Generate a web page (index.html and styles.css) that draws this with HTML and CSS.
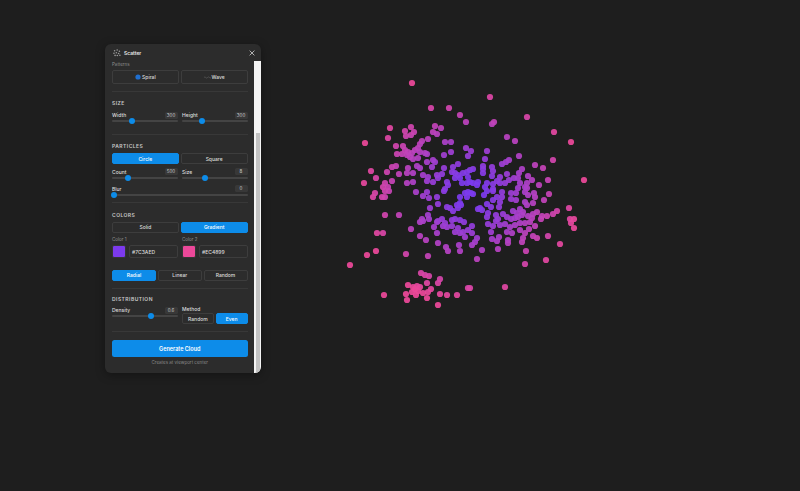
FILE: index.html
```html
<!DOCTYPE html>
<html lang="en">
<head>
<meta charset="utf-8">
<title>Scatter</title>
<link rel="stylesheet" href="styles.css">
</head>
<body>
<svg class="cloud" width="800" height="491" viewBox="0 0 800 491">
<defs><radialGradient id="cloudGrad" gradientUnits="userSpaceOnUse" cx="470" cy="192" r="112"><stop offset=".12" stop-color="#7C3AED"/><stop offset="1" stop-color="#EC4899"/></radialGradient></defs>
<g class="dots" fill="url(#cloudGrad)">
<circle cx="412" cy="83"/><circle cx="431" cy="108"/><circle cx="449" cy="108"/><circle cx="460" cy="115"/><circle cx="466" cy="122"/><circle cx="390" cy="128"/><circle cx="411" cy="127"/><circle cx="405" cy="131"/><circle cx="414" cy="132"/><circle cx="406" cy="136"/><circle cx="411" cy="135"/><circle cx="435" cy="126"/><circle cx="441" cy="128"/><circle cx="433" cy="132"/><circle cx="437" cy="134"/><circle cx="388" cy="138"/><circle cx="428" cy="139"/><circle cx="445" cy="142"/><circle cx="451" cy="142"/><circle cx="365" cy="143"/><circle cx="396" cy="146"/><circle cx="403" cy="146"/><circle cx="422" cy="141"/><circle cx="420" cy="144"/><circle cx="418" cy="148"/><circle cx="466" cy="148"/><circle cx="451" cy="152"/><circle cx="444" cy="155"/><circle cx="468" cy="156"/>
<circle cx="405" cy="150"/><circle cx="408" cy="152"/><circle cx="412" cy="153"/><circle cx="407" cy="155"/><circle cx="402" cy="154"/><circle cx="397" cy="154"/><circle cx="410" cy="157"/><circle cx="413" cy="159"/><circle cx="418" cy="158"/><circle cx="415" cy="150"/><circle cx="420" cy="152"/><circle cx="425" cy="153"/><circle cx="427" cy="154"/><circle cx="427" cy="162"/><circle cx="433" cy="160"/><circle cx="435" cy="162"/><circle cx="432" cy="167"/><circle cx="371" cy="171"/><circle cx="376" cy="178"/><circle cx="364" cy="183"/><circle cx="387" cy="172"/><circle cx="392" cy="167"/><circle cx="396" cy="166"/><circle cx="399" cy="174"/><circle cx="408" cy="168"/><circle cx="417" cy="166"/><circle cx="420" cy="168"/><circle cx="407" cy="173"/><circle cx="413" cy="173"/><circle cx="392" cy="181"/><circle cx="385" cy="183"/><circle cx="383" cy="187"/><circle cx="388" cy="187"/><circle cx="407" cy="183"/><circle cx="413" cy="182"/><circle cx="427" cy="181"/><circle cx="433" cy="182"/>
<circle cx="423" cy="175"/><circle cx="428" cy="177"/><circle cx="437" cy="175"/><circle cx="442" cy="174"/><circle cx="444" cy="168"/><circle cx="453" cy="167"/><circle cx="458" cy="164"/><circle cx="455" cy="173"/><circle cx="452" cy="172"/><circle cx="447" cy="182"/><circle cx="448" cy="185"/><circle cx="438" cy="178"/><circle cx="458" cy="175"/><circle cx="463" cy="173"/><circle cx="467" cy="172"/><circle cx="460" cy="178"/><circle cx="455" cy="178"/><circle cx="468" cy="177"/><circle cx="445" cy="189"/><circle cx="462" cy="183"/><circle cx="467" cy="183"/>
<circle cx="490" cy="97"/><circle cx="527" cy="117"/><circle cx="494" cy="122"/><circle cx="492" cy="124"/><circle cx="554" cy="132"/><circle cx="571" cy="142"/><circle cx="507" cy="137"/><circle cx="515" cy="141"/><circle cx="487" cy="151"/><circle cx="471" cy="151"/><circle cx="485" cy="159"/><circle cx="519" cy="156"/><circle cx="509" cy="160"/><circle cx="506" cy="162"/><circle cx="502" cy="164"/><circle cx="553" cy="160"/><circle cx="535" cy="165"/><circle cx="543" cy="168"/><circle cx="522" cy="169"/><circle cx="519" cy="173"/><circle cx="507" cy="174"/><circle cx="528" cy="176"/><circle cx="532" cy="180"/><circle cx="548" cy="180"/><circle cx="584" cy="180"/><circle cx="539" cy="185"/><circle cx="483" cy="166"/><circle cx="483" cy="169"/><circle cx="483" cy="173"/><circle cx="492" cy="167"/><circle cx="493" cy="171"/><circle cx="492" cy="176"/><circle cx="473" cy="169"/><circle cx="470" cy="170"/><circle cx="500" cy="177"/><circle cx="497" cy="181"/><circle cx="493" cy="184"/><circle cx="500" cy="183"/><circle cx="478" cy="182"/><circle cx="473" cy="183"/><circle cx="477" cy="185"/><circle cx="470" cy="182"/><circle cx="485" cy="187"/><circle cx="493" cy="189"/><circle cx="487" cy="183"/><circle cx="505" cy="183"/><circle cx="509" cy="180"/><circle cx="514" cy="178"/><circle cx="518" cy="178"/><circle cx="520" cy="183"/><circle cx="527" cy="183"/><circle cx="525" cy="187"/><circle cx="518" cy="188"/><circle cx="527" cy="188"/>
<circle cx="473" cy="194"/><circle cx="471" cy="193"/><circle cx="484" cy="195"/><circle cx="493" cy="191"/><circle cx="487" cy="191"/><circle cx="502" cy="192"/><circle cx="511" cy="193"/><circle cx="516" cy="193"/><circle cx="525" cy="192"/><circle cx="528" cy="195"/><circle cx="534" cy="193"/><circle cx="535" cy="197"/><circle cx="549" cy="194"/><circle cx="502" cy="197"/><circle cx="497" cy="197"/><circle cx="493" cy="200"/><circle cx="500" cy="202"/><circle cx="499" cy="207"/><circle cx="511" cy="199"/><circle cx="516" cy="200"/><circle cx="525" cy="202"/><circle cx="527" cy="205"/><circle cx="533" cy="203"/><circle cx="544" cy="200"/><circle cx="487" cy="204"/><circle cx="491" cy="207"/><circle cx="480" cy="208"/><circle cx="482" cy="210"/><circle cx="478" cy="209"/><circle cx="569" cy="208"/><circle cx="557" cy="211"/><circle cx="553" cy="214"/><circle cx="547" cy="216"/><circle cx="542" cy="216"/><circle cx="541" cy="219"/><circle cx="537" cy="212"/><circle cx="533" cy="214"/><circle cx="532" cy="218"/><circle cx="528" cy="216"/><circle cx="513" cy="211"/><circle cx="517" cy="213"/><circle cx="520" cy="209"/><circle cx="523" cy="212"/><circle cx="518" cy="217"/><circle cx="522" cy="215"/><circle cx="515" cy="218"/><circle cx="570" cy="219"/><circle cx="574" cy="219"/><circle cx="571" cy="223"/><circle cx="574" cy="228"/>
<circle cx="488" cy="213"/><circle cx="487" cy="217"/><circle cx="496" cy="215"/><circle cx="503" cy="214"/><circle cx="507" cy="217"/><circle cx="511" cy="219"/><circle cx="498" cy="219"/><circle cx="496" cy="221"/><circle cx="488" cy="224"/><circle cx="493" cy="226"/><circle cx="500" cy="225"/><circle cx="505" cy="224"/><circle cx="510" cy="227"/><circle cx="515" cy="225"/><circle cx="520" cy="223"/><circle cx="525" cy="223"/><circle cx="530" cy="222"/><circle cx="535" cy="226"/><circle cx="520" cy="230"/><circle cx="529" cy="229"/><circle cx="525" cy="233"/><circle cx="507" cy="232"/><circle cx="512" cy="233"/><circle cx="491" cy="232"/><circle cx="472" cy="226"/><circle cx="472" cy="233"/><circle cx="477" cy="238"/><circle cx="475" cy="242"/><circle cx="472" cy="245"/><circle cx="499" cy="237"/><circle cx="497" cy="241"/><circle cx="492" cy="239"/><circle cx="508" cy="240"/><circle cx="508" cy="243"/><circle cx="523" cy="238"/><circle cx="522" cy="242"/><circle cx="533" cy="236"/><circle cx="537" cy="238"/><circle cx="548" cy="236"/><circle cx="560" cy="244"/><circle cx="482" cy="250"/><circle cx="498" cy="249"/><circle cx="526" cy="251"/><circle cx="477" cy="259"/><circle cx="546" cy="260"/><circle cx="525" cy="264"/><circle cx="505" cy="287"/><circle cx="470" cy="288"/>
<circle cx="375" cy="193"/><circle cx="373" cy="197"/><circle cx="382" cy="197"/><circle cx="385" cy="197"/><circle cx="385" cy="191"/><circle cx="389" cy="191"/><circle cx="385" cy="215"/><circle cx="399" cy="215"/><circle cx="416" cy="192"/><circle cx="427" cy="192"/><circle cx="423" cy="196"/><circle cx="429" cy="198"/><circle cx="437" cy="197"/><circle cx="438" cy="204"/><circle cx="444" cy="191"/><circle cx="460" cy="197"/><circle cx="467" cy="197"/><circle cx="465" cy="193"/><circle cx="468" cy="192"/><circle cx="447" cy="207"/><circle cx="450" cy="208"/><circle cx="453" cy="211"/><circle cx="457" cy="205"/><circle cx="461" cy="205"/><circle cx="458" cy="208"/><circle cx="460" cy="203"/><circle cx="430" cy="208"/><circle cx="428" cy="215"/><circle cx="429" cy="219"/><circle cx="422" cy="219"/><circle cx="420" cy="222"/><circle cx="423" cy="221"/><circle cx="438" cy="221"/><circle cx="442" cy="219"/><circle cx="445" cy="223"/><circle cx="443" cy="226"/><circle cx="437" cy="222"/><circle cx="447" cy="227"/><circle cx="452" cy="220"/><circle cx="455" cy="219"/><circle cx="452" cy="226"/><circle cx="460" cy="220"/><circle cx="464" cy="222"/><circle cx="434" cy="227"/><circle cx="411" cy="229"/><circle cx="420" cy="236"/><circle cx="426" cy="240"/><circle cx="437" cy="233"/><circle cx="438" cy="243"/><circle cx="458" cy="228"/><circle cx="455" cy="232"/><circle cx="460" cy="233"/><circle cx="465" cy="237"/><circle cx="463" cy="232"/><circle cx="468" cy="230"/><circle cx="459" cy="245"/><circle cx="446" cy="247"/><circle cx="448" cy="251"/><circle cx="460" cy="251"/>
<circle cx="377" cy="233"/><circle cx="383" cy="233"/><circle cx="376" cy="251"/><circle cx="367" cy="255"/><circle cx="350" cy="265"/><circle cx="406" cy="254"/><circle cx="428" cy="256"/><circle cx="421" cy="273"/><circle cx="425" cy="275"/><circle cx="429" cy="276"/><circle cx="440" cy="279"/><circle cx="438" cy="283"/><circle cx="408" cy="285"/><circle cx="413" cy="287"/><circle cx="417" cy="286"/><circle cx="420" cy="287"/><circle cx="415" cy="289"/><circle cx="418" cy="291"/><circle cx="412" cy="292"/><circle cx="427" cy="283"/><circle cx="423" cy="293"/><circle cx="416" cy="295"/><circle cx="406" cy="294"/><circle cx="407" cy="300"/><circle cx="427" cy="298"/><circle cx="431" cy="289"/><circle cx="428" cy="292"/><circle cx="384" cy="295"/><circle cx="440" cy="294"/><circle cx="447" cy="295"/><circle cx="457" cy="295"/><circle cx="438" cy="305"/><circle cx="468" cy="288"/>
</g>
</svg>

<aside class="panel">
  <header class="panel-head">
    <svg class="head-icon" width="8" height="8" viewBox="0 0 10 10" fill="#9a9a9a"><circle cx="2" cy="2.2" r="1"/><circle cx="5.2" cy="1.2" r="1"/><circle cx="8" cy="2.8" r="1"/><circle cx="1.2" cy="5.4" r="1"/><circle cx="4.2" cy="4.6" r="1"/><circle cx="7" cy="5.6" r="1"/><circle cx="2.6" cy="8" r="1"/><circle cx="5.4" cy="8.2" r="1"/><circle cx="8.6" cy="7.8" r="1"/></svg>
    <span class="panel-title">Scatter</span>
    <svg class="close-icon" width="6" height="6" viewBox="0 0 6 6" fill="none" stroke="#d0d0d0" stroke-width=".8"><path d="M.6.6l4.8 4.8M5.4.6L.6 5.4"/></svg>
  </header>
  <div class="panel-body">
    <div class="panel-content">
      <div class="small-label patterns-label">Patterns</div>
      <div class="btn-row">
        <button class="btn"><svg width="6" height="6" viewBox="0 0 6 6"><circle cx="3" cy="3" r="2.6" fill="#1f6fd0"/></svg>Spiral</button>
        <button class="btn"><svg width="7" height="3" viewBox="0 0 7 3" fill="none" stroke="#666" stroke-width=".6"><path d="M0 1.5q1-1.2 1.8 0t1.8 0 1.8 0 1.6 0"/></svg>Wave</button>
      </div>
      <hr class="divider div-a">

      <h2 class="section-title">SIZE</h2>
      <div class="two-col size-row">
        <div class="field">
          <div class="field-head"><span>Width</span><span class="chip">300</span></div>
          <div class="slider"><i class="thumb" style="left:30%"></i></div>
        </div>
        <div class="field">
          <div class="field-head"><span>Height</span><span class="chip">300</span></div>
          <div class="slider"><i class="thumb" style="left:30%"></i></div>
        </div>
      </div>
      <hr class="divider div-b">

      <h2 class="section-title">PARTICLES</h2>
      <div class="btn-row">
        <button class="btn active">Circle</button>
        <button class="btn">Square</button>
      </div>
      <div class="two-col count-row">
        <div class="field">
          <div class="field-head"><span>Count</span><span class="chip">500</span></div>
          <div class="slider"><i class="thumb" style="left:24%"></i></div>
        </div>
        <div class="field">
          <div class="field-head"><span>Size</span><span class="chip">8</span></div>
          <div class="slider"><i class="thumb" style="left:35%"></i></div>
        </div>
      </div>
      <div class="field blur-row">
        <div class="field-head"><span>Blur</span><span class="chip">0</span></div>
        <div class="slider"><i class="thumb" style="left:1.5%"></i></div>
      </div>
      <hr class="divider div-c">

      <h2 class="section-title">COLORS</h2>
      <div class="btn-row">
        <button class="btn">Solid</button>
        <button class="btn active">Gradient</button>
      </div>
      <div class="two-col color-row">
        <div>
          <div class="small-label">Color 1</div>
          <div class="color-input"><span class="swatch swatch-a"></span><span class="hex">#7C3AED</span></div>
        </div>
        <div>
          <div class="small-label">Color 2</div>
          <div class="color-input"><span class="swatch swatch-b"></span><span class="hex">#EC4899</span></div>
        </div>
      </div>
      <div class="btn-row three">
        <button class="btn active">Radial</button>
        <button class="btn">Linear</button>
        <button class="btn">Random</button>
      </div>
      <hr class="divider div-d">

      <h2 class="section-title">DISTRIBUTION</h2>
      <div class="two-col dist-row">
        <div class="field">
          <div class="field-head"><span>Density</span><span class="chip">0.6</span></div>
          <div class="slider"><i class="thumb" style="left:59%"></i></div>
        </div>
        <div>
          <div class="method-label">Method</div>
          <div class="btn-row">
            <button class="btn">Random</button>
            <button class="btn active">Even</button>
          </div>
        </div>
      </div>
      <hr class="divider div-e">

      <button class="generate">Generate Cloud</button>
      <p class="hint">Creates at viewport center</p>
    </div>
    <div class="scrollbar"><div class="scroll-thumb"></div></div>
  </div>
</aside>
</body>
</html>
```
FILE: styles.css
```css
* { box-sizing: border-box; }
html, body { margin: 0; height: 100%; }
body {
  position: relative;
  overflow: hidden;
  background: #1e1e1e;
  font-family: Inter, "Liberation Sans", sans-serif;
  color: #e6e6e6;
}
.cloud { position: absolute; left: 0; top: 0; }
.dots circle { r: 3.1px; fill-opacity: .93; }

.panel {
  position: absolute;
  left: 105px;
  top: 44px;
  width: 156px;
  height: 329px;
  display: flex;
  flex-direction: column;
  overflow: hidden;
  background: #2c2c2c;
  border-radius: 6px;
  box-shadow: 0 2px 10px rgba(0, 0, 0, .35);
}
.panel-head {
  flex: none;
  height: 17px;
  display: flex;
  align-items: center;
  padding: 0 6px 0 8px;
  gap: 3px;
}
.panel-title { font-size: 5px; font-weight: 600; flex: 1; color: #e8e8e8; }
.panel-body { flex: 1; min-height: 0; display: flex; }
.panel-content { flex: 1; min-width: 0; padding: 0 6.5px 0 7px; overflow: hidden; }
.scrollbar { flex: none; width: 7px; background: #f4f4f4; padding: 72px 1px 0 2px; }
.scroll-thumb { height: 100%; background: #c2c2c2; }

.small-label { font-size: 4.5px; line-height: 6px; color: #8f8f8f; }
.patterns-label { margin-top: 1px; }
.section-title { margin: 0; font-size: 5px; line-height: 7px; font-weight: 600; letter-spacing: .45px; color: #c8c8c8; }

.btn-row { display: grid; grid-template-columns: 1fr 1fr; gap: 2px; }
.btn-row.three { grid-template-columns: 44px 1fr 44px; margin-top: 12px; }
.btn {
  height: 11px;
  padding: 0;
  display: flex;
  align-items: center;
  justify-content: center;
  gap: 1px;
  font: 500 5px Inter, "Liberation Sans", sans-serif;
  color: #dcdcdc;
  background: transparent;
  border: .6px solid #3d3d3d;
  border-radius: 2px;
}
.btn.active { background: #0d8ce9; border-color: #0d8ce9; color: #fff; }
.patterns-label + .btn-row { margin-top: 2px; }
.patterns-label + .btn-row .btn { height: 14px; }
.section-title + .btn-row { margin-top: 3px; }

.divider { height: 1px; margin: 0; border: 0; background: #383838; }
.div-a { margin: 7px 0 8px; }
.div-b { margin: 12px 0 8px; }
.div-c { margin: 6.5px 0 8.5px; }
.div-d { margin: 7px 0 7.5px; }
.div-e { margin: 7px 0 8px; }

.two-col { display: grid; grid-template-columns: 65.5px 65.5px; column-gap: 4.5px; }
.size-row { margin-top: 4px; }
.count-row { margin-top: 3.5px; }
.blur-row { margin-top: 6px; }
.color-row { margin-top: 4px; }
.dist-row { margin-top: 3px; }

.field-head { display: flex; justify-content: space-between; align-items: center; height: 8px; font-size: 5px; font-weight: 500; color: #dedede; }
.chip { min-width: 13px; height: 7px; line-height: 7px; text-align: center; font-size: 4.5px; font-weight: 400; background: #383838; border-radius: 1.5px; color: #c8c8c8; }
.slider { position: relative; height: 2px; margin-top: 1px; background: #444; border-radius: 1px; }
.thumb { position: absolute; top: -2px; width: 6px; height: 6px; margin-left: -3px; border-radius: 50%; background: #0d8ce9; }

.color-input { display: flex; align-items: center; gap: 3px; margin-top: 2px; }
.swatch { flex: none; width: 14px; height: 13px; border: 1px solid #353535; border-radius: 2px; }
.swatch-a { background: #7c3aed; }
.swatch-b { background: #ec4899; }
.hex { flex: 1; height: 13px; line-height: 12px; padding-left: 2px; font-size: 5px; font-weight: 500; color: #dcdcdc; border: .6px solid #3d3d3d; border-radius: 2px; }

.method-label { height: 6px; line-height: 6px; font-size: 5px; font-weight: 500; color: #dedede; margin-bottom: 1px; }

.generate {
  display: block;
  width: 100%;
  height: 17px;
  padding: 0;
  font: 600 5.5px Inter, "Liberation Sans", sans-serif;
  color: #fff;
  background: #0d8ce9;
  border: 0;
  border-radius: 2.5px;
}
.hint { margin: 3px 0 0; font-size: 4.5px; line-height: 6px; text-align: center; color: #8a8a8a; }
```
